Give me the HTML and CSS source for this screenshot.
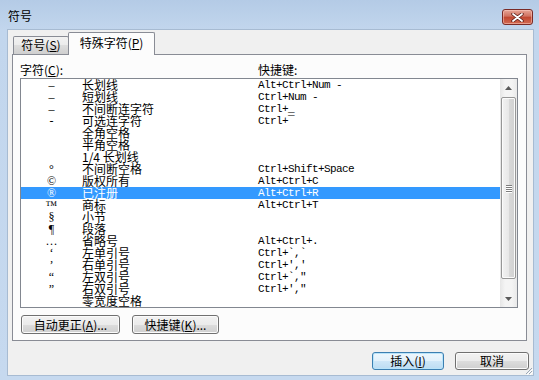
FILE: index.html
```html
<!DOCTYPE html>
<html>
<head>
  <meta charset="UTF-8">
  <title>符号</title>
  <link rel="stylesheet" href="styles.css">
</head>
<body>
  <div class="window">
    <div class="titlebar">
      <span class="title">符号</span>
      <div class="close">
        <svg width="13" height="9" viewBox="0 0 13 9">
          <path d="M2 1 L11 8 M11 1 L2 8" stroke="#5b1f1a" stroke-width="3.4" stroke-linecap="round"/>
          <path d="M2 1 L11 8 M11 1 L2 8" stroke="#ffffff" stroke-width="1.8" stroke-linecap="round"/>
        </svg>
      </div>
    </div>

    <div class="client">
      <div class="tabs">
        <div class="tab">符号(<u>S</u>)</div>
        <div class="tab active">特殊字符(<u>P</u>)</div>
      </div>

      <div class="panel">
        <div class="labels">
          <span class="label-char">字符(<u>C</u>):</span>
          <span>快捷键:</span>
        </div>

        <div class="listbox">
          <div class="rows">
            <div class="row"><span class="sym">–</span><span class="name">长划线</span><span class="keys">Alt+Ctrl+Num -</span></div>
            <div class="row"><span class="sym">–</span><span class="name">短划线</span><span class="keys">Ctrl+Num -</span></div>
            <div class="row"><span class="sym">–</span><span class="name">不间断连字符</span><span class="keys">Ctrl+_</span></div>
            <div class="row"><span class="sym">-</span><span class="name">可选连字符</span><span class="keys">Ctrl+¯</span></div>
            <div class="row"><span class="sym"></span><span class="name">全角空格</span><span class="keys"></span></div>
            <div class="row"><span class="sym"></span><span class="name">半角空格</span><span class="keys"></span></div>
            <div class="row"><span class="sym"></span><span class="name">1/4 长划线</span><span class="keys"></span></div>
            <div class="row"><span class="sym">°</span><span class="name">不间断空格</span><span class="keys">Ctrl+Shift+Space</span></div>
            <div class="row"><span class="sym">©</span><span class="name">版权所有</span><span class="keys">Alt+Ctrl+C</span></div>
            <div class="row selected"><span class="sym">®</span><span class="name">已注册</span><span class="keys">Alt+Ctrl+R</span></div>
            <div class="row"><span class="sym">™</span><span class="name">商标</span><span class="keys">Alt+Ctrl+T</span></div>
            <div class="row"><span class="sym">§</span><span class="name">小节</span><span class="keys"></span></div>
            <div class="row"><span class="sym">¶</span><span class="name">段落</span><span class="keys"></span></div>
            <div class="row"><span class="sym">…</span><span class="name">省略号</span><span class="keys">Alt+Ctrl+.</span></div>
            <div class="row"><span class="sym">‘</span><span class="name">左单引号</span><span class="keys">Ctrl+`,`</span></div>
            <div class="row"><span class="sym">’</span><span class="name">右单引号</span><span class="keys">Ctrl+','</span></div>
            <div class="row"><span class="sym">“</span><span class="name">左双引号</span><span class="keys">Ctrl+`,"</span></div>
            <div class="row"><span class="sym">”</span><span class="name">右双引号</span><span class="keys">Ctrl+',"</span></div>
            <div class="row"><span class="sym"></span><span class="name">零宽度空格</span><span class="keys"></span></div>
          </div>

          <div class="scrollbar">
            <div class="arrow">
              <svg width="7" height="4" viewBox="0 0 7 4"><path d="M0 4 L3.5 0 L7 4 Z" fill="#5a5a5a"/></svg>
            </div>
            <div class="thumb">
              <div class="grip"><i></i><i></i><i></i><i></i></div>
            </div>
            <div class="track"></div>
            <div class="arrow">
              <svg width="7" height="4" viewBox="0 0 7 4"><path d="M0 0 L7 0 L3.5 4 Z" fill="#5a5a5a"/></svg>
            </div>
          </div>
        </div>

        <div class="actions">
          <div class="btn btn-auto">自动更正(<u>A</u>)...</div>
          <div class="btn btn-keys">快捷键(<u>K</u>)...</div>
        </div>
      </div>

      <div class="footer">
        <div class="btn btn-insert default">插入(<u>I</u>)</div>
        <div class="btn btn-cancel">取消</div>
      </div>

      <svg class="sizegrip" width="9" height="9" viewBox="0 0 9 9">
        <path d="M8 2 L2 8 M8 5 L5 8" stroke="#9aa6b4" stroke-width="1"/>
        <path d="M9 3 L3 9 M9 6 L6 9" stroke="#ffffff" stroke-width="1"/>
      </svg>
    </div>
  </div>
</body>
</html>
```

FILE: styles.css
```css
body {
  margin: 0;
  font-family: "Noto Sans CJK SC", "Liberation Sans", sans-serif;
  font-size: 12px;
  color: #000000;
}

.window {
  width: 539px;
  height: 380px;
  box-sizing: border-box;
  background: linear-gradient(#b4cbe6 0px, #c2d6ed 30px, #c6d9ef 100%);
  display: flex;
  flex-direction: column;
}

.titlebar {
  height: 29px;
  display: flex;
  align-items: flex-start;
  justify-content: space-between;
}

.title {
  margin: 9px 0 0 8px;
  line-height: 14px;
  color: #000000;
}

.close {
  width: 31px;
  height: 16px;
  margin: 9px 6px 0 0;
  box-sizing: border-box;
  border: 1px solid #7a2b26;
  border-radius: 3px;
  background: linear-gradient(#e6a596 0%, #d0715f 45%, #c0462f 50%, #d26a52 100%);
  box-shadow: inset 0 0 0 1px rgba(255, 210, 200, 0.5);
  display: flex;
  align-items: center;
  justify-content: center;
}

.client {
  position: relative;
  width: 527px;
  height: 347px;
  margin-left: 7px;
  box-sizing: border-box;
  border: 1px solid #a7bbd2;
  background: #f0f0f0;
}

/* tabs */
.tabs {
  display: flex;
  align-items: flex-end;
  height: 23px;
  margin-top: 2px;
  padding-left: 5px;
}

.tab {
  box-sizing: border-box;
  height: 18px;
  width: 56px;
  margin-bottom: 1px;
  border: 1px solid #898c95;
  border-bottom: none;
  border-radius: 2px 2px 0 0;
  background: linear-gradient(#f2f2f2, #ebebeb 50%, #dddddd 50%, #cfcfcf);
  text-align: center;
  line-height: 16px;
}

.tab.active {
  position: relative;
  z-index: 1;
  width: 87px;
  height: 23px;
  margin-left: -1px;
  margin-bottom: 0;
  background: #fcfcfc;
  line-height: 20px;
}

.panel {
  width: 515px;
  height: 287px;
  margin: -1px 0 0 4px;
  box-sizing: border-box;
  border: 1px solid #898c95;
  background: #fcfcfc;
  padding: 7px 0 0 7px;
}

.labels {
  display: grid;
  grid-template-columns: 238px 1fr;
  line-height: 15px;
  height: 15px;
  margin-bottom: 1px;
}

/* list */
.listbox {
  width: 498px;
  height: 230px;
  box-sizing: border-box;
  border: 1px solid #828790;
  background: #ffffff;
  display: flex;
}

.rows {
  width: 479px;
}

.row {
  display: grid;
  grid-template-columns: 61px 176px 1fr;
  height: 12px;
  line-height: 12px;
}

.row.selected {
  background: #3399ff;
  color: #ffffff;
}

.sym {
  text-align: center;
  font-family: "Liberation Serif", serif;
  font-size: 12px;
}

.name {
  white-space: nowrap;
}

.keys {
  font-family: "Liberation Mono", monospace;
  font-size: 11px;
  letter-spacing: -0.6px;
  white-space: pre;
}

/* scrollbar */
.scrollbar {
  width: 17px;
  display: flex;
  flex-direction: column;
  background: linear-gradient(to right, #e6e6e6, #f4f4f4 30%, #f4f4f4 70%, #e9e9e9);
}

.arrow {
  height: 17px;
  display: flex;
  align-items: center;
  justify-content: center;
}

.thumb {
  height: 182px;
  margin: 1px 1px 0 1px;
  box-sizing: border-box;
  border: 1px solid #979797;
  border-radius: 2px;
  background: linear-gradient(to right, #f3f3f3, #e8e8e8 50%, #d9d9d9 51%, #d1d1d1);
  box-shadow: inset 0 0 0 1px #fbfbfb;
  display: flex;
  align-items: center;
  justify-content: center;
}

.grip {
  display: flex;
  flex-direction: column;
  gap: 1px;
}

.grip i {
  display: block;
  width: 6px;
  height: 1px;
  background: #7d7d7d;
  box-shadow: 0 1px 0 #ffffff;
}

.track {
  flex: 1;
}

/* buttons */
.actions {
  display: flex;
  gap: 12px;
  margin: 7px 0 0 1px;
}

.btn {
  box-sizing: border-box;
  height: 19px;
  border: 1px solid #707070;
  border-radius: 3px;
  background: linear-gradient(#f2f2f2 0%, #ebebeb 50%, #dddddd 51%, #cfcfcf 100%);
  box-shadow: inset 0 0 0 1px #fbfbfb;
  text-align: center;
  line-height: 17px;
}

.btn-auto {
  width: 99px;
}

.btn-keys {
  width: 87px;
}

.footer {
  display: flex;
  justify-content: flex-end;
  gap: 11px;
  margin-top: 11px;
  padding-right: 4px;
}

.footer .btn {
  height: 18px;
  line-height: 16px;
}

.btn-insert {
  width: 72px;
}

.btn-cancel {
  width: 74px;
}

.btn.default {
  border-color: #3c7fb1;
  box-shadow: inset 0 0 0 1px #b9e4fa;
  background: linear-gradient(#eef7fd 0%, #e2f1fb 50%, #cfe7f8 51%, #bcdcf2 100%);
}

.sizegrip {
  position: absolute;
  right: 0;
  bottom: 0;
}
```
